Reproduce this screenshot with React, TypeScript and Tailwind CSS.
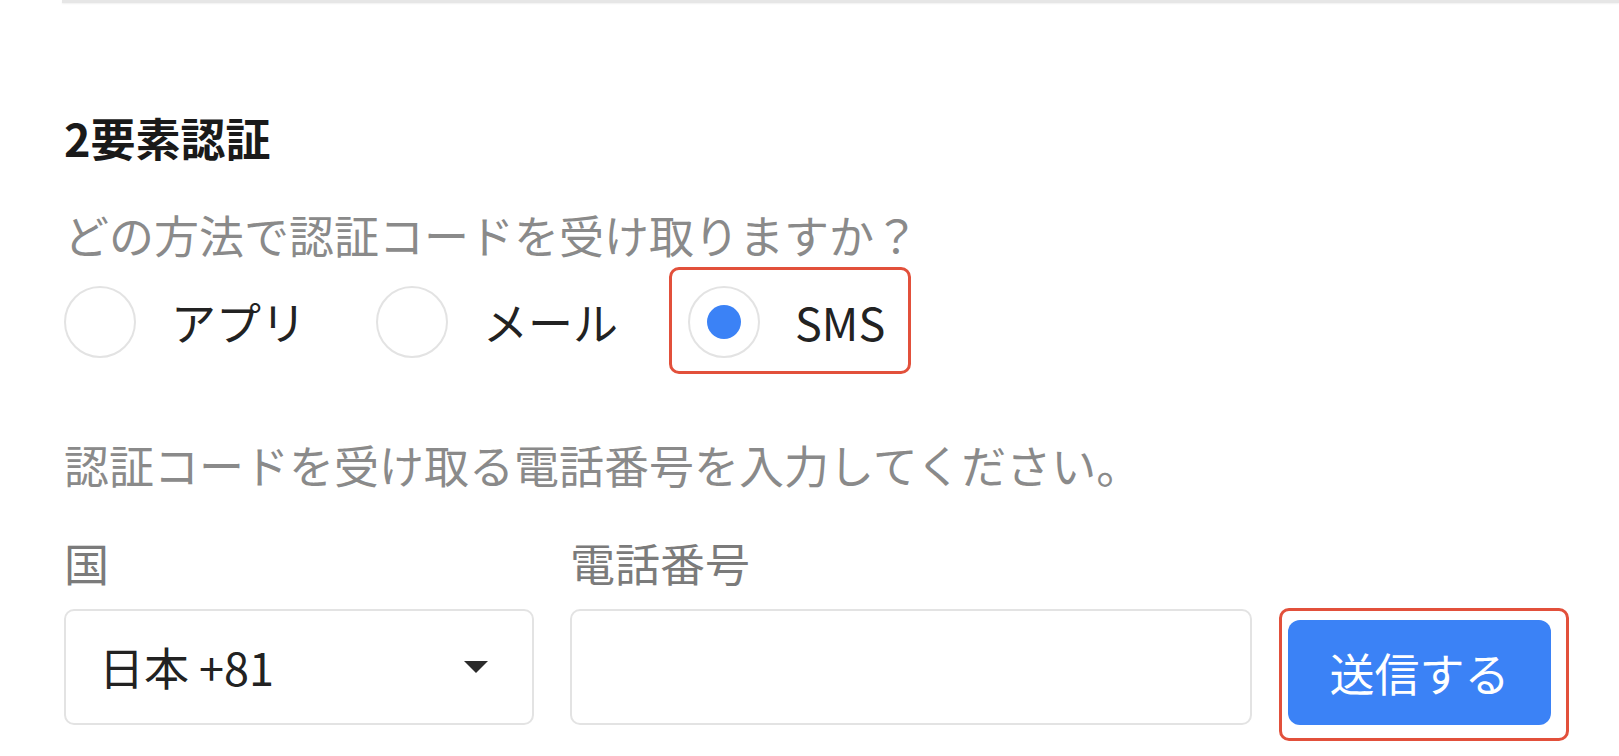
const jp = "font-['Noto_Sans_CJK_JP',sans-serif]";

function Radio({ label, checked }: { label: string; checked?: boolean }) {
  return (
    <label className="flex items-center gap-[35px]">
      <span className="flex h-[72px] w-[72px] items-center justify-center rounded-full border-2 border-[#e3e3e3] bg-white">
        {checked && <span className="h-[34px] w-[34px] rounded-full bg-[#3b82f6]" />}
      </span>
      <span className="text-[45px] leading-[60px] text-[#222]">{label}</span>
    </label>
  );
}

export default function App() {
  return (
    <div className={`${jp} min-h-screen bg-white pl-[62px]`}>
      <div className="h-[3px] bg-[#e6e6e6] shadow-[0_1px_2px_rgba(0,0,0,0.06)]" />

      <div className="pl-[2px]">
        <h2 className="mt-[105px] text-[45px] font-bold leading-[60px] text-[#1a1a1a]">
          2要素認証
        </h2>
        <p className="mt-[37px] text-[45px] leading-[60px] text-[#8a8a8a]">
          どの方法で認証コードを受け取りますか？
        </p>

        <div className="mt-[21px] flex items-center gap-[70px]">
          <Radio label="アプリ" />
          <Radio label="メール" />
          <div className="relative">
            <Radio label="SMS" checked />
            <div className="pointer-events-none absolute -top-[19px] -bottom-[16px] -left-[19px] -right-[26px] rounded-[10px] border-[3px] border-[#e2503b]" />
          </div>
        </div>

        <p className="mt-[77px] text-[45px] leading-[60px] text-[#8a8a8a]">
          認証コードを受け取る電話番号を入力してください。
        </p>

        <div className="mt-[38px] flex items-end gap-[36px]">
          <div className="flex flex-col gap-[16px]">
            <span className="text-[45px] leading-[60px] text-[#7b7b7b]">国</span>
            <div className="flex h-[116px] w-[470px] items-center justify-between rounded-[10px] border-2 border-[#e3e3e3] pl-[33px] pr-[44px]">
              <span className="text-[45px] leading-[60px] text-[#222]">日本 +81</span>
              <svg width="24" height="12" viewBox="0 0 24 12">
                <path d="M0 0 L24 0 L12 12 Z" fill="#2b2b2b" />
              </svg>
            </div>
          </div>

          <div className="flex flex-col gap-[16px]">
            <span className="text-[45px] leading-[60px] text-[#7b7b7b]">電話番号</span>
            <input
              type="tel"
              className="h-[116px] w-[682px] rounded-[10px] border-2 border-[#e3e3e3] px-[30px] text-[45px] outline-none"
            />
          </div>

          <div className="relative">
            <button className="flex h-[105px] w-[263px] items-center justify-center rounded-[12px] bg-[#3b82f6] text-[45px] leading-[60px] text-white">
              送信する
            </button>
            <div className="pointer-events-none absolute -top-[12px] -bottom-[16px] -left-[9px] -right-[18px] rounded-[10px] border-[3px] border-[#e2503b]" />
          </div>
        </div>
      </div>
    </div>
  );
}
